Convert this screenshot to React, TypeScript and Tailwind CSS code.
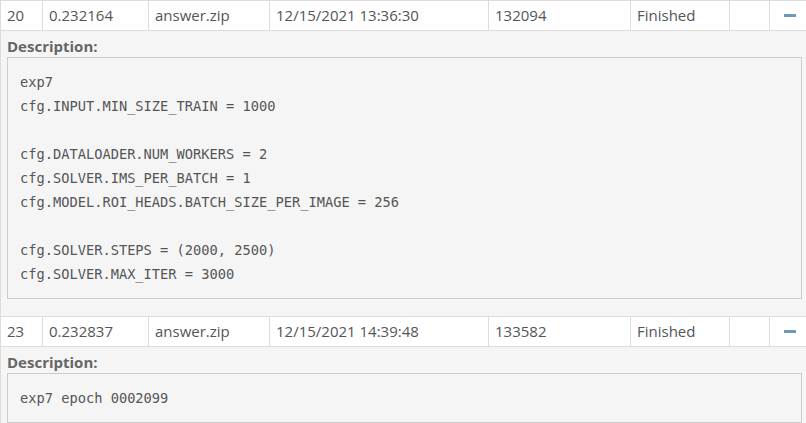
import React from "react";

type Submission = {
  id: number;
  score: string;
  file: string;
  date: string;
  size: string;
  status: string;
  description: string[];
};

const submissions: Submission[] = [
  {
    id: 20,
    score: "0.232164",
    file: "answer.zip",
    date: "12/15/2021 13:36:30",
    size: "132094",
    status: "Finished",
    description: [
      "exp7",
      "cfg.INPUT.MIN_SIZE_TRAIN = 1000",
      "",
      "cfg.DATALOADER.NUM_WORKERS = 2",
      "cfg.SOLVER.IMS_PER_BATCH = 1",
      "cfg.MODEL.ROI_HEADS.BATCH_SIZE_PER_IMAGE = 256",
      "",
      "cfg.SOLVER.STEPS = (2000, 2500)",
      "cfg.SOLVER.MAX_ITER = 3000",
    ],
  },
  {
    id: 23,
    score: "0.232837",
    file: "answer.zip",
    date: "12/15/2021 14:39:48",
    size: "133582",
    status: "Finished",
    description: ["exp7 epoch 0002099"],
  },
];

function Cell({ width, children }: { width: string; children?: React.ReactNode }) {
  return (
    <div className={`${width} shrink-0 h-full flex items-center border-l border-[#dddddd] pl-[6px]`}>
      {children}
    </div>
  );
}

function SubmissionRow({ item }: { item: Submission }) {
  return (
    <div>
      <div className="flex h-[31px] border-y border-[#dddddd] bg-white text-[15px] text-[#555555]">
        <Cell width="w-[42px]">{item.id}</Cell>
        <Cell width="w-[106px]">{item.score}</Cell>
        <Cell width="w-[121px]">{item.file}</Cell>
        <Cell width="w-[219px]">{item.date}</Cell>
        <Cell width="w-[142px]">{item.size}</Cell>
        <Cell width="w-[99px]">{item.status}</Cell>
        <Cell width="w-[40px]" />
        <div className="w-[41px] shrink-0 h-full flex items-center justify-center border-x border-[#dddddd]">
          <span className="block w-[12px] h-[3px] bg-[#6e9ab9]" />
        </div>
      </div>
      <div className="bg-[#f5f5f5] border-x border-[#dddddd] pl-[6px] pr-[7px] pt-[4px] pb-[17px]">
        <div className="text-[15px] leading-[22px] font-bold text-[#666666]">Description:</div>
        <pre
          className="border border-[#cccccc] bg-[#f5f5f5] px-[12px] py-[12px] text-[13.7px] leading-[24px] text-[#555555] whitespace-pre"
          style={{ fontFamily: '"DejaVu Sans Mono", monospace' }}
        >
          {item.description.join("\n")}
        </pre>
      </div>
    </div>
  );
}

export default function App() {
  return (
    <div
      className="w-[806px] h-[423px] overflow-hidden bg-white"
      style={{ fontFamily: '"Open Sans", "Noto Sans", sans-serif' }}
    >
      <div className="w-[810px]">
        {submissions.map((item) => (
          <SubmissionRow key={item.id} item={item} />
        ))}
      </div>
    </div>
  );
}
